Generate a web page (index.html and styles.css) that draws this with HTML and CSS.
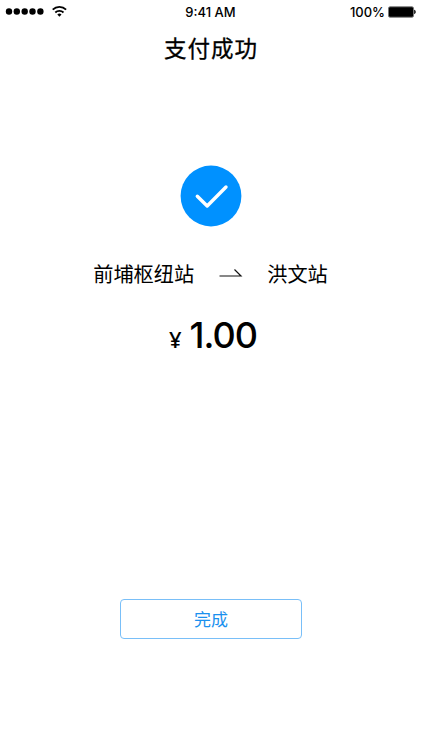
FILE: index.html
```
<!DOCTYPE html>
<html lang="zh-CN">

<head>
    <meta charset="UTF-8">
    <meta name="viewport" content="width=device-width, initial-scale=1.0">
    <title>支付成功</title>
    <link rel="stylesheet" href="styles.css">
</head>

<body>
    <div class="status-bar">
        <div class="status-left">
            <svg class="signal" width="40" height="8" viewBox="0 0 40 8">
                <circle cx="4" cy="3.5" r="3.2" />
                <circle cx="11.8" cy="3.5" r="3.2" />
                <circle cx="19.7" cy="3.5" r="3.2" />
                <circle cx="27.5" cy="3.5" r="3.2" />
                <circle cx="35.4" cy="3.5" r="3.2" />
            </svg>
            <svg class="wifi" width="16" height="12" viewBox="0 0 16 12">
                <path d="M.7 3.7a9.5 9.5 0 0 1 13.4 0M3.3 6.5a5.9 5.9 0 0 1 8.2 0" fill="none" stroke="#000" stroke-width="1.8" />
                <path d="M5.3 8.5a3.1 3.1 0 0 1 4.2 0L7.4 10.7z" />
            </svg>
        </div>
        <div class="status-time">9:41 AM</div>
        <div class="status-right">
            <span>100%</span>
            <svg class="battery" width="28" height="12" viewBox="0 0 28 12">
                <rect x=".5" y=".8" width="25" height="10.4" rx="1.5" fill="#000" stroke="#777" stroke-width=".9" />
                <path d="M26.2 3.8c2 .6 2 3.8 0 4.4z" />
            </svg>
        </div>
    </div>

    <h1 class="title">支付成功</h1>

    <div class="result">
        <svg class="result-icon" width="62" height="62" viewBox="0 0 62 62">
            <circle cx="31" cy="31" r="30.4" fill="#0091ff" />
            <path d="M17.3 31.2L27.2 41L46 22" fill="none" stroke="#fff" stroke-width="3.4" stroke-linecap="round" stroke-linejoin="round" />
        </svg>
        <div class="route">
            <span>前埔枢纽站</span>
            <svg class="arrow" width="24" height="10" viewBox="0 0 24 10">
                <path d="M.5 7H22L15.5 .5" fill="none" stroke="#111" stroke-width="1.2" />
            </svg>
            <span>洪文站</span>
        </div>
        <div class="price"><span class="unit">¥</span><span class="amount">1.00</span></div>
    </div>

    <button type="button" class="btn-done">完成</button>
</body>

</html>
```
FILE: styles.css
```
* {
    box-sizing: border-box;
}

body {
    margin: 0;
    height: 750px;
    overflow: hidden;
    background: #fff;
    color: #000;
    font-family: Inter, "Noto Sans CJK SC", sans-serif;
    display: flex;
    flex-direction: column;
    align-items: center;
}

.status-bar {
    width: 100%;
    height: 24px;
    padding: 0 6px 0 5px;
    display: grid;
    grid-template-columns: 1fr auto 1fr;
    align-items: center;
    font-size: 13px;
    font-weight: 500;
}

.status-left,
.status-right {
    display: flex;
    align-items: center;
}

.status-left {
    gap: 7px;
    margin-top: -1px;
}

.status-right {
    justify-content: flex-end;
    gap: 3px;
}

.title {
    margin: 7px 0 0;
    height: 47px;
    line-height: 36px;
    font-size: 22.5px;
    font-weight: 400;
    letter-spacing: 1px;
    -webkit-text-stroke: .3px #000;
}

.result {
    margin-top: 87px;
    display: flex;
    flex-direction: column;
    align-items: center;
}

.result-icon {
    display: block;
}

.route {
    margin: 33px 1px 0 0;
    height: 30px;
    display: flex;
    align-items: center;
    font-size: 20.2px;
    line-height: 30px;
}

.arrow {
    margin: 0 24px 2px 25px;
}

.price {
    height: 50px;
    margin: 20px 0 0 4px;
    display: flex;
    align-items: baseline;
    line-height: 50px;
    font-weight: 500;
}

.unit {
    margin-right: 8px;
    font-family: "Noto Sans", sans-serif;
    font-size: 22px;
}

.amount {
    font-size: 36px;
    letter-spacing: -1px;
}

.btn-done {
    width: 182px;
    height: 40px;
    margin-top: 239px;
    padding: 0 0 2px;
    border: 1px solid #79bff8;
    border-radius: 4px;
    background: #fff;
    color: #1a90ee;
    font-family: inherit;
    font-size: 17px;
}
```
